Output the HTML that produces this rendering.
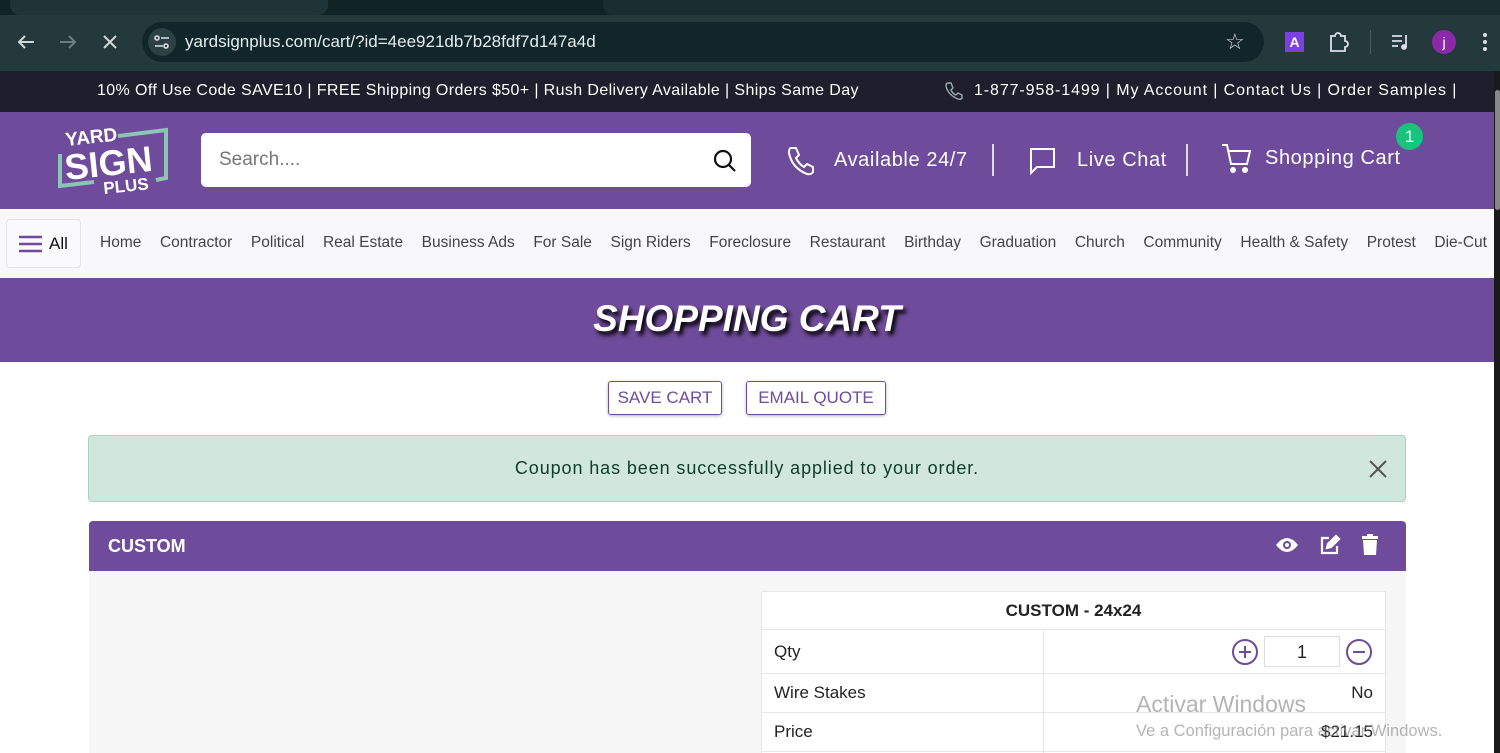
<!DOCTYPE html>
<html><head><meta charset="utf-8"><style>
*{box-sizing:border-box;margin:0;padding:0}
body{width:1500px;height:753px;overflow:hidden;font-family:"Liberation Sans",sans-serif;background:#fff;position:relative}
.abs{position:absolute}
.tabs{left:0;top:0;width:1500px;height:15px;background:#102426}
.tab1{left:10px;top:0;width:318px;height:15px;background:#1f3436;border-radius:0 0 10px 10px}
.tab2{left:603px;top:0;width:897px;height:15px;background:#1a2d2f;border-radius:0 0 0 10px}
.toolbar{left:0;top:15px;width:1500px;height:56px;background:#24393b}
.addr{left:142px;top:22px;width:1122px;height:40px;background:#11262a;border-radius:20px}
.url{left:185px;top:32px;color:#e6ecec;font-size:17px}
.promo{left:0;top:71px;width:1500px;height:41px;background:#1f1e2d;color:#fff;font-size:16px}
.hdr{left:0;top:112px;width:1500px;height:97px;background:#6f4c9b}
.search{left:201px;top:133px;width:550px;height:54px;background:#fff;border-radius:5px}
.hw{color:#fff;font-size:20px;letter-spacing:0.6px}
.nav{left:0;top:209px;width:1500px;height:69px;background:#f8f8fa}
.navlinks{left:100px;top:234px;width:1387px;font-size:15.5px;color:#444;white-space:nowrap;display:flex;justify-content:space-between}
.banner{left:0;top:278px;width:1494px;height:84px;background:#6f4c9b;text-align:center}
.banner span{display:inline-block;margin-top:20px;color:#fff;font-size:37px;font-weight:bold;font-style:italic;letter-spacing:0;text-shadow:3px 4px 4px #000}
.btn{top:381px;height:34px;border:1.5px solid #6f4c9b;border-radius:3px;color:#6f4c9b;font-size:17px;text-align:center;line-height:32px;box-shadow:0 1px 3px rgba(0,0,0,.3)}
.alert{left:88px;top:435px;width:1318px;height:67px;background:#d1e7dd;border:1px solid #a9d3bf;border-radius:4px;color:#0f3d2a;font-size:18px;letter-spacing:0.9px;text-align:center;line-height:65px}
.card{left:89px;top:521px;width:1317px;height:50px;background:#6f4c9b;border-radius:4px 4px 0 0}
.body{left:89px;top:571px;width:1317px;height:182px;background:#f6f6f6;overflow:hidden}
table{position:absolute;left:672px;top:20px;width:625px;border-collapse:collapse;background:#fff;font-size:17px;color:#222}
td{border:1px solid #e6e6e6;padding:0 12px}
</style></head><body>
<div class="abs tabs"></div><div class="abs tab1"></div><div class="abs tab2"></div>
<div class="abs toolbar"></div>
<svg class="abs" style="left:16px;top:32px" width="110" height="20" fill="none" stroke-width="2"><path d="M18 10H3M9 4L3 10L9 16" stroke="#cfd8d8"/><path d="M44 10H59M53 4L59 10L53 16" stroke="#6d7e7f"/><path d="M88 4L100 16M100 4L88 16" stroke="#cfd8d8"/></svg>
<div class="abs addr"></div>
<div class="abs" style="left:148px;top:28px;width:28px;height:28px;border-radius:14px;background:#2b4144"></div>
<svg class="abs" style="left:153px;top:33px" width="18" height="18" stroke="#d8e0e0" stroke-width="1.6" fill="none"><circle cx="4" cy="5" r="2"/><path d="M8 5H16M2 13H10"/><circle cx="13" cy="13" r="2"/></svg>
<div class="abs url">yardsignplus.com/cart/?id=4ee921db7b28fdf7d147a4d</div>
<div class="abs" style="left:1225px;top:29px;color:#dde;font-size:22px">☆</div>
<div class="abs" style="left:1285px;top:32px;width:19px;height:20px;background:#7b3fe4;color:#fff;font-size:14px;text-align:center;line-height:20px;font-weight:bold">A</div>
<svg class="abs" style="left:1327px;top:31px" width="22" height="22" stroke="#dde" stroke-width="1.8" fill="none"><path d="M4 5H8A3 3 0 0 1 14 5H18V10A3 3 0 0 1 18 16V20H4Z"/></svg>
<div class="abs" style="left:1370px;top:30px;width:1px;height:24px;background:#4a5c5e"></div>
<svg class="abs" style="left:1391px;top:33px" width="20" height="18" stroke="#dde" stroke-width="1.8" fill="none"><path d="M1 3H11M1 8H11M1 13H7M15 2V14"/><circle cx="13" cy="14" r="2" fill="#dde"/></svg>
<div class="abs" style="left:1432px;top:30px;width:24px;height:24px;border-radius:12px;background:#8a2aa8;color:#fff;font-size:14px;text-align:center;line-height:24px">j</div>
<svg class="abs" style="left:1482px;top:32px" width="6" height="20" fill="#dde"><circle cx="3" cy="3" r="2"/><circle cx="3" cy="10" r="2"/><circle cx="3" cy="17" r="2"/></svg>

<div class="abs promo"><span class="abs" style="left:97px;top:11px;white-space:nowrap;letter-spacing:0.38px">10% Off Use Code SAVE10 | FREE Shipping Orders $50+ | Rush Delivery Available | Ships Same Day</span>
<svg class="abs" style="left:944px;top:10px" width="20" height="20" fill="none" stroke="#9aa" stroke-width="1.4"><path d="M4 2L7 2L9 7L7 9Q9 13 12 14L14 12L18 14L18 17Q17 19 14 18Q4 14 2 5Q2 2 4 2Z"/></svg>
<span class="abs" style="left:974px;top:11px;white-space:nowrap;letter-spacing:0.9px">1-877-958-1499 | My Account | Contact Us | Order Samples |</span></div>

<div class="abs hdr"></div>
<svg class="abs" style="left:56px;top:124px" width="112" height="70"><path d="M4 30V62L38 58" stroke="#8cc5b3" stroke-width="4" fill="none"/><path d="M62 12L110 6V54L100 56" stroke="#8cc5b3" stroke-width="4" fill="none"/><text x="10" y="22" font-family="Liberation Sans" font-weight="bold" font-size="19" fill="#fff" transform="rotate(-6 10 22)">YARD</text><text x="10" y="56" font-family="Liberation Sans" font-weight="bold" font-size="36" fill="#fff" transform="rotate(-6 10 56)">SIGN</text><text x="48" y="70" font-family="Liberation Sans" font-weight="bold" font-size="17" fill="#fff" transform="rotate(-6 48 70)">PLUS</text></svg>
<div class="abs search"><span class="abs" style="left:18px;top:16px;font-size:19px;color:#777">Search....</span>
<svg class="abs" style="left:512px;top:16px" width="24" height="24" fill="none" stroke="#111" stroke-width="2.2"><circle cx="10" cy="10" r="8"/><path d="M16 16L22 22"/></svg></div>
<svg class="abs" style="left:786px;top:145px" width="30" height="32" fill="none" stroke="#fff" stroke-width="2"><path d="M5 3L10 3L13 10L10 13Q13 19 18 22L21 19L27 22L27 27Q25 30 21 29Q6 23 3 8Q3 3 5 3Z"/></svg>
<div class="abs hw" style="left:834px;top:149px">Available 24/7</div>
<div class="abs" style="left:992px;top:144px;width:2px;height:32px;background:#ddd"></div>
<svg class="abs" style="left:1028px;top:146px" width="30" height="30" fill="none" stroke="#fff" stroke-width="2"><path d="M3 3H26V21H9L3 27Z"/></svg>
<div class="abs hw" style="left:1077px;top:149px">Live Chat</div>
<div class="abs" style="left:1186px;top:144px;width:2px;height:32px;background:#ddd"></div>
<svg class="abs" style="left:1221px;top:142px" width="32" height="34" fill="none" stroke="#fff" stroke-width="2"><path d="M1 3H6L10 22H26L29 9H8"/><circle cx="12" cy="28" r="2" fill="#fff"/><circle cx="24" cy="28" r="2" fill="#fff"/></svg>
<div class="abs hw" style="left:1265px;top:147px">Shopping Cart</div>
<div class="abs" style="left:1396px;top:123px;width:27px;height:27px;border-radius:14px;background:#19c37d;color:#fff;font-size:17px;text-align:center;line-height:27px">1</div>

<div class="abs nav"></div>
<div class="abs" style="left:6px;top:219px;width:75px;height:49px;border:1px solid #e3e3e8;border-radius:4px;background:#fafafc"></div>
<svg class="abs" style="left:18px;top:234px" width="26" height="20" stroke="#6f4c9b" stroke-width="2.5"><path d="M1 3H24M1 10H24M1 17H24"/></svg>
<div class="abs" style="left:49px;top:234px;font-size:17px;color:#111">All</div>
<div class="abs navlinks"><span>Home</span><span>Contractor</span><span>Political</span><span>Real Estate</span><span>Business Ads</span><span>For Sale</span><span>Sign Riders</span><span>Foreclosure</span><span>Restaurant</span><span>Birthday</span><span>Graduation</span><span>Church</span><span>Community</span><span>Health &amp; Safety</span><span>Protest</span><span>Die-Cut</span></div>

<div class="abs banner"><span>SHOPPING CART</span></div>
<div class="abs btn" style="left:608px;width:114px">SAVE CART</div>
<div class="abs btn" style="left:746px;width:140px">EMAIL QUOTE</div>
<div class="abs alert">Coupon has been successfully applied to your order.</div>
<svg class="abs" style="left:1368px;top:459px" width="20" height="20" stroke="#555" stroke-width="2"><path d="M2 2L18 18M18 2L2 18"/></svg>

<div class="abs card"><span class="abs" style="left:19px;top:15px;color:#fff;font-weight:bold;font-size:18px">CUSTOM</span>
<svg class="abs" style="left:1186px;top:14px" width="24" height="20"><path d="M1 10Q12 -4 23 10Q12 24 1 10Z" fill="#fff"/><circle cx="12" cy="10" r="4" fill="#6f4c9b"/><circle cx="12" cy="10" r="2" fill="#fff"/></svg>
<svg class="abs" style="left:1230px;top:13px" width="22" height="22" fill="none" stroke="#fff" stroke-width="2.2"><path d="M10 4H3V19H18V12"/><path d="M8 14L9 10L17 2L20 5L12 13Z" fill="#fff"/></svg>
<svg class="abs" style="left:1272px;top:13px" width="18" height="22" fill="#fff"><rect x="1" y="2" width="16" height="3"/><rect x="6" y="0" width="6" height="3"/><path d="M2 6H16L15 21H3Z"/></svg></div>
<div class="abs body">
<table>
<tr style="height:38px"><td colspan="2" style="text-align:center;font-weight:bold">CUSTOM - 24x24</td></tr>
<tr style="height:44px"><td style="width:282px">Qty</td><td style="text-align:right;position:relative">
<svg style="position:absolute;left:186px;top:7px" width="30" height="30" fill="none" stroke="#6f4c9b" stroke-width="2"><circle cx="15" cy="15" r="12"/><path d="M15 9V21M9 15H21"/></svg>
<div style="position:absolute;left:220px;top:6px;width:76px;height:31px;border:1px solid #ddd;text-align:center;line-height:30px;font-size:18px">1</div>
<svg style="position:absolute;left:300px;top:7px" width="30" height="30" fill="none" stroke="#6f4c9b" stroke-width="2"><circle cx="15" cy="15" r="12"/><path d="M9 15H21"/></svg></td></tr>
<tr style="height:39px"><td>Wire Stakes</td><td style="text-align:right">No</td></tr>
<tr style="height:39px"><td>Price</td><td style="text-align:right">$21.15</td></tr>
<tr style="height:20px"><td></td><td></td></tr>
</table></div>
<div class="abs" style="left:1136px;top:691px;font-size:23px;color:rgba(130,130,130,.6)">Activar Windows</div>
<div class="abs" style="left:1136px;top:722px;font-size:16.5px;color:rgba(130,130,130,.6)">Ve a Configuración para activar Windows.</div>
<div class="abs" style="left:1494px;top:71px;width:6px;height:682px;background:#1a1a1a"></div>
<div class="abs" style="left:1495px;top:90px;width:5px;height:120px;background:#888;border-radius:3px"></div>
</body></html>
